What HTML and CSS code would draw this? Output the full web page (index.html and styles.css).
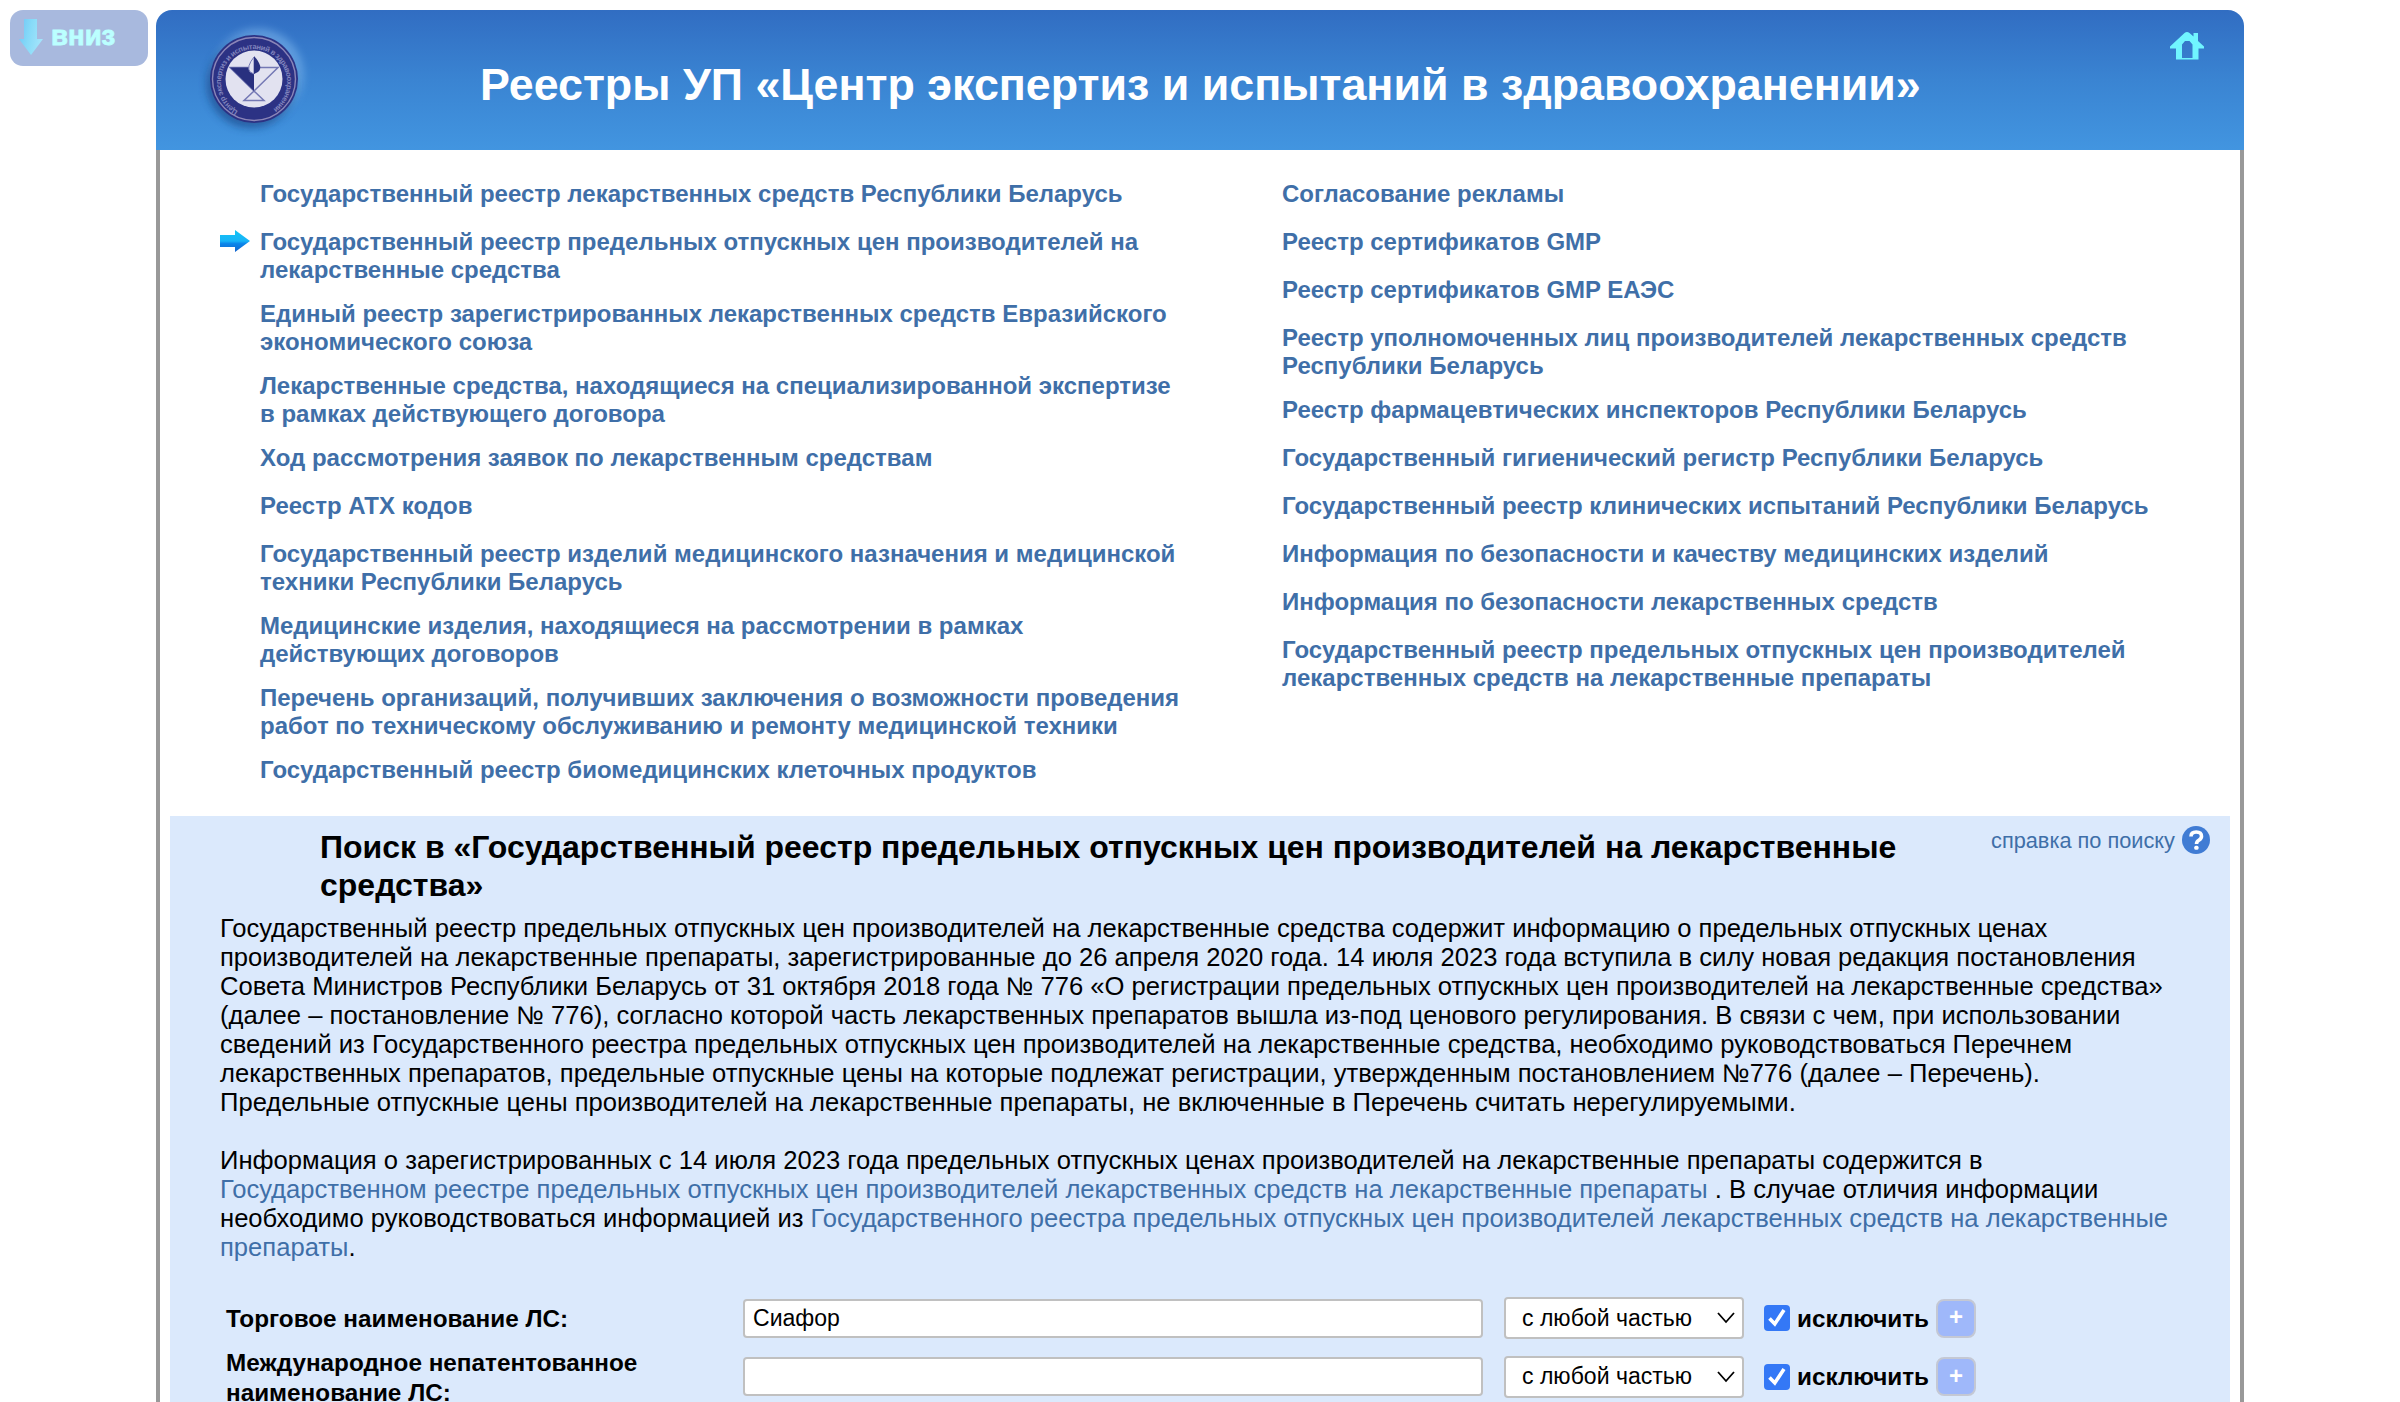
FILE: index.html
```html
<!DOCTYPE html>
<html lang="ru">
<head>
<meta charset="utf-8">
<title>Реестры УП «Центр экспертиз и испытаний в здравоохранении»</title>
<link rel="stylesheet" href="styles.css">
</head>
<body>
<a class="down" href="#bottom">
  <svg class="down-icon" viewBox="0 0 26 38" width="26" height="38">
    <defs><linearGradient id="down-fill" x1="0" y1="0" x2="1" y2="0.3"><stop offset="0" stop-color="#6fc4f6"/><stop offset=".5" stop-color="#86daf8"/><stop offset="1" stop-color="#a2e4fb"/></linearGradient></defs>
    <path d="M6 1H19V21H25L13 37L1 21H6Z" fill="url(#down-fill)"/>
  </svg>
  <span>вниз</span>
</a>
<div class="page">
  <header class="header">
    <svg class="logo" viewBox="0 0 120 120" width="120" height="120">
      <defs>
        <filter id="soft" x="-30%" y="-30%" width="160%" height="160%"><feGaussianBlur stdDeviation="4"/></filter>
        <path id="ring-text" d="M44 92A33 33 0 1 1 76 92"/>
      </defs>
      <circle cx="64" cy="55" r="45" fill="#8fc4f4" opacity=".5" filter="url(#soft)"/>
      <circle cx="57" cy="65" r="44" fill="#123d7c" opacity=".6" filter="url(#soft)"/>
      <circle cx="60" cy="60" r="44" fill="#2c3284"/>
      <circle cx="60" cy="60" r="41.5" fill="none" stroke="#8c86b8" stroke-width="1.400"/>
      <circle cx="60" cy="60" r="28.5" fill="#e2e2f0"/>
      <text class="ring"><textPath href="#ring-text" textLength="170">Центр экспертиз и испытаний в здравоохранении</textPath></text>
      <path d="M36 48.500H84L60 72L70 81.500H50L60 72Z" fill="none" stroke="#7478b4" stroke-width="1.500"/>
      <path d="M36 48.500H60V72Z" fill="#29307f"/>
      <path d="M60 38Q52 48 56 53L60 55Z" fill="#e2e2f0" stroke="#7478b4"/>
      <path d="M60 37Q70 48 64 53L60 55Z" fill="#29307f"/>
    </svg>
    <h1 class="title">Реестры УП «Центр экспертиз и испытаний в здравоохранении»</h1>
    <svg class="home" viewBox="0 0 34 28" width="34" height="28"><path fill="#70f5ff" fill-rule="evenodd" d="M0 14.500L14.500 1Q17 -.8 19.500 1L23.500 4.500V1H28V9L34 14.500V16.500H28.500V27.500H6V16.500H0ZM12 26H22.500V12.500L19.500 9H15L12 12.500Z"/></svg>
  </header>
  <main class="content">
    <nav class="nav">
      <ul class="links left">
        <li><a>Государственный реестр лекарственных средств Республики Беларусь</a></li>
        <li class="current"><svg class="arrow" viewBox="0 0 30 24" width="30" height="24"><defs><linearGradient id="arrow-fill" x1="0" y1="0" x2="0" y2="1"><stop offset="0" stop-color="#12c4f4"/><stop offset=".5" stop-color="#18b4f8"/><stop offset=".62" stop-color="#0b86ea"/><stop offset="1" stop-color="#1464cc"/></linearGradient></defs><path d="M0 6H15V1L30 12L15 23V18H0Z" fill="url(#arrow-fill)"/></svg><a>Государственный реестр предельных отпускных цен производителей на<br>лекарственные средства</a></li>
        <li><a>Единый реестр зарегистрированных лекарственных средств Евразийского<br>экономического союза</a></li>
        <li><a>Лекарственные средства, находящиеся на специализированной экспертизе<br>в рамках действующего договора</a></li>
        <li><a>Ход рассмотрения заявок по лекарственным средствам</a></li>
        <li><a>Реестр АТХ кодов</a></li>
        <li><a>Государственный реестр изделий медицинского назначения и медицинской<br>техники Республики Беларусь</a></li>
        <li><a>Медицинские изделия, находящиеся на рассмотрении в рамках<br>действующих договоров</a></li>
        <li><a>Перечень организаций, получивших заключения о возможности проведения<br>работ по техническому обслуживанию и ремонту медицинской техники</a></li>
        <li><a>Государственный реестр биомедицинских клеточных продуктов</a></li>
      </ul>
      <ul class="links">
        <li><a>Согласование рекламы</a></li>
        <li><a>Реестр сертификатов GMP</a></li>
        <li><a>Реестр сертификатов GMP ЕАЭС</a></li>
        <li><a>Реестр уполномоченных лиц производителей лекарственных средств<br>Республики Беларусь</a></li>
        <li><a>Реестр фармацевтических инспекторов Республики Беларусь</a></li>
        <li><a>Государственный гигиенический регистр Республики Беларусь</a></li>
        <li><a>Государственный реестр клинических испытаний Республики Беларусь</a></li>
        <li><a>Информация по безопасности и качеству медицинских изделий</a></li>
        <li><a>Информация по безопасности лекарственных средств</a></li>
        <li><a>Государственный реестр предельных отпускных цен производителей<br>лекарственных средств на лекарственные препараты</a></li>
      </ul>
    </nav>
    <section class="search">
      <div class="search-head">
        <h2 class="subtitle">Поиск в «Государственный реестр предельных отпускных цен производителей на лекарственные<br>средства»</h2>
        <a class="help"><span>справка по поиску</span><svg viewBox="0 0 28 28" width="28" height="28"><circle cx="14" cy="14" r="14" fill="#407cd4"/><path d="M9 10.500Q9 6 14.200 6Q19.500 6 19.500 10.200Q19.500 12.600 16.800 14.200Q14.500 15.500 14.500 18" fill="none" stroke="#fff" stroke-width="3.600"/><rect x="12.300" y="19.800" width="4.200" height="4" rx="1.500" fill="#fff"/></svg></a>
      </div>
      <p class="text">Государственный реестр предельных отпускных цен производителей на лекарственные средства содержит информацию о предельных отпускных ценах<br>производителей на лекарственные препараты, зарегистрированные до 26 апреля 2020 года. 14 июля 2023 года вступила в силу новая редакция постановления<br>Совета Министров Республики Беларусь от 31 октября 2018 года № 776 «О регистрации предельных отпускных цен производителей на лекарственные средства»<br>(далее – постановление № 776), согласно которой часть лекарственных препаратов вышла из-под ценового регулирования. В связи с чем, при использовании<br>сведений из Государственного реестра предельных отпускных цен производителей на лекарственные средства, необходимо руководствоваться Перечнем<br>лекарственных препаратов, предельные отпускные цены на которые подлежат регистрации, утвержденным постановлением №776 (далее – Перечень).<br>Предельные отпускные цены производителей на лекарственные препараты, не включенные в Перечень считать нерегулируемыми.<br><br>Информация о зарегистрированных с 14 июля 2023 года предельных отпускных ценах производителей на лекарственные препараты содержится в<br><a>Государственном реестре предельных отпускных цен производителей лекарственных средств на лекарственные препараты</a> . В случае отличия информации<br>необходимо руководствоваться информацией из <a>Государственного реестра предельных отпускных цен производителей лекарственных средств на лекарственные<br>препараты</a>.</p>
      <form class="form">
        <div class="row">
          <label class="name">Торговое наименование ЛС:</label>
          <input class="field" type="text" value="Сиафор">
          <div class="select"><span>с любой частью</span><svg viewBox="0 0 18 12" width="18" height="12"><path d="M1 1L9 10L17 1" fill="none" stroke="#000" stroke-width="1.800"/></svg></div>
          <span class="check"><svg viewBox="0 0 26 26" width="26" height="26"><rect width="26" height="26" rx="4" fill="#3478f6"/><path d="M5.500 13.500L10.800 19L20 5" fill="none" stroke="#fff" stroke-width="3.600"/></svg></span>
          <span class="exclude">исключить</span>
          <button class="plus" type="button">+</button>
        </div>
        <div class="row">
          <label class="name">Международное непатентованное<br>наименование ЛС:</label>
          <input class="field" type="text">
          <div class="select"><span>с любой частью</span><svg viewBox="0 0 18 12" width="18" height="12"><path d="M1 1L9 10L17 1" fill="none" stroke="#000" stroke-width="1.800"/></svg></div>
          <span class="check"><svg viewBox="0 0 26 26" width="26" height="26"><rect width="26" height="26" rx="4" fill="#3478f6"/><path d="M5.500 13.500L10.800 19L20 5" fill="none" stroke="#fff" stroke-width="3.600"/></svg></span>
          <span class="exclude">исключить</span>
          <button class="plus" type="button">+</button>
        </div>
      </form>
    </section>
  </main>
</div>
</body>
</html>
```
FILE: styles.css
```css
* { box-sizing: border-box; }
body {
  margin: 0;
  height: 1402px;
  overflow: hidden;
  background: #fff;
  color: #000;
  font-family: "Liberation Sans", Arial, sans-serif;
  font-size: 25.6px;
  white-space: nowrap;
}
a { color: #3f6fa8; text-decoration: none; }
.down {
  position: absolute;
  left: 10px;
  top: 10px;
  width: 138px;
  height: 56px;
  display: flex;
  padding: 8px 0 0 8px;
  gap: 7px;
  border-radius: 13px;
  background: #a8b9de;
  color: #bff;
  font-weight: bold;
  font-size: 27.6px;
  line-height: 36px;
  -webkit-text-stroke: 0.8px #bff;
}
.page { width: 2088px; padding-top: 10px; margin: 0 auto; }
.header {
  display: flex;
  height: 140px;
  border-radius: 16px 16px 0 0;
  background: linear-gradient(#316dc2, #3a84d2 50%, #4295e0);
}
.logo { flex: none; margin: 9px 0 0 38px; }
.ring { font-size: 7.5px; font-weight: bold; fill: #8285be; }
.title {
  flex: 1;
  margin: 0 0 0 166px;
  color: #fff;
  font-size: 44.8px;
  line-height: 148px;
}
.home { flex: none; margin: 22px 40px 0 0; }
.content {
  height: 1252px;
  padding: 30px 10px 0;
  border: solid #999;
  border-width: 0 4px;
}
.nav { display: flex; height: 636px; padding-left: 90px; }
.links {
  display: flex;
  flex: none;
  flex-direction: column;
  gap: 16px;
  margin: 0;
  padding: 0;
  list-style: none;
  font-size: 24px;
  font-weight: bold;
  line-height: 28px;
}
.links li { min-height: 32px; }
.left { width: 1022px; }
.current { display: flex; margin-left: -40px; gap: 10px; }
.arrow { margin-top: 1px; }
.search {
  height: 586px;
  padding: 14px 20px 0 50px;
  background: #dbe9fc;
}
.search-head { display: flex; justify-content: space-between; height: 84px; }
.subtitle {
  margin: -1px 0 0 100px;
  font-size: 32px;
  line-height: 37.6px;
}
.help {
  display: flex;
  align-items: flex-start;
  gap: 7px;
  height: 28px;
  margin-top: -4px;
  font-size: 21.76px;
  line-height: 30px;
}
.text { margin: 0; line-height: 29px; }
.form { display: flex; flex-direction: column; padding: 27px 0 0 6px; }
.row { display: flex; align-items: center; height: 58.5px; }
.name { width: 517px; padding-top: 2px; font-size: 24.3px; font-weight: bold; line-height: 30px; }
.field {
  width: 740px;
  height: 39px;
  padding: 0 8px;
  border: 2px solid #c0c0c0;
  border-radius: 4px;
  background: #fff;
  font: 23.04px "Liberation Sans", Arial, sans-serif;
}
.select {
  display: flex;
  align-items: center;
  justify-content: space-between;
  width: 240px;
  height: 42px;
  margin-left: 21px;
  padding: 0 7px 0 16px;
  border: 2px solid #c0c0c0;
  border-radius: 4px;
  background: #fff;
  font-size: 23.04px;
}
.check { display: flex; margin: 0 7px 0 20px; }
.exclude { width: 139px; padding-top: 1px; font-size: 24.3px; font-weight: bold; }
.plus {
  width: 40px;
  height: 39px;
  padding: 0 0 2px;
  border: 2px solid #c4c8d4;
  border-radius: 8px;
  background: #9fb8fa;
  color: #fff;
  font: bold 24px/30px "Liberation Sans", Arial, sans-serif;
}
```
